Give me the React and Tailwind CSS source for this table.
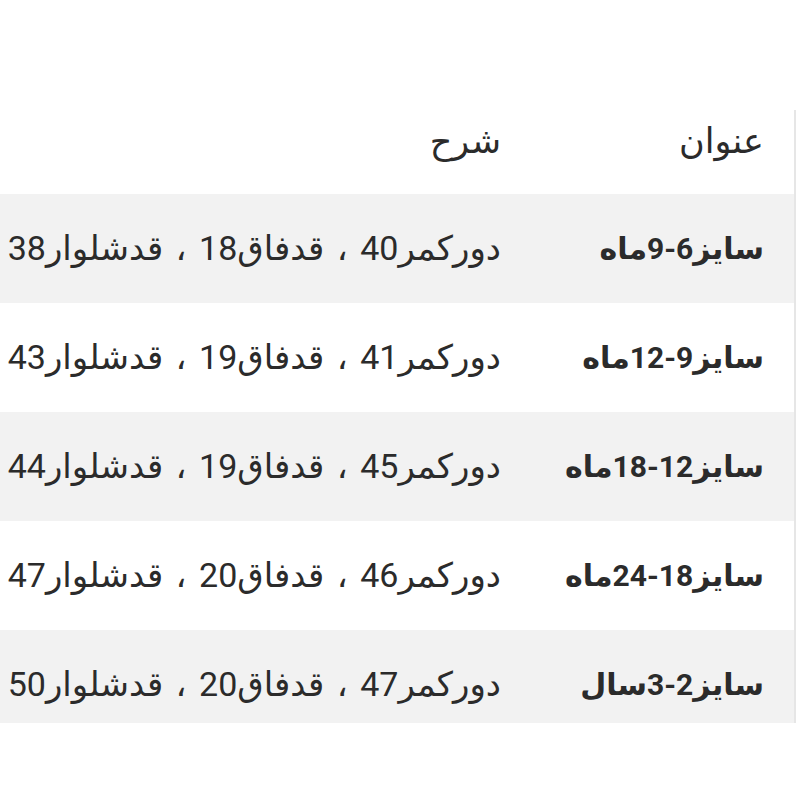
const rows = [
  { title: 'سایز6-9ماه', desc: 'دورکمر40 ، قدفاق18 ، قدشلوار38' },
  { title: 'سایز9-12ماه', desc: 'دورکمر41 ، قدفاق19 ، قدشلوار43' },
  { title: 'سایز12-18ماه', desc: 'دورکمر45 ، قدفاق19 ، قدشلوار44' },
  { title: 'سایز18-24ماه', desc: 'دورکمر46 ، قدفاق20 ، قدشلوار47' },
  { title: 'سایز2-3سال', desc: 'دورکمر47 ، قدفاق20 ، قدشلوار50' },
];

export default function App() {
  return (
    <div className="w-[800px] h-[800px] bg-white overflow-hidden font-['Roboto','DejaVu_Sans',sans-serif] text-[#2b2b2b]">
      <div className="h-[110px]" />
      <div dir="rtl" className="w-[796px]">
        <table className="w-full border-collapse border-r-2 border-[#e6e6e6] whitespace-nowrap">
          <thead>
            <tr className="h-[84px] text-[35px]">
              <th className="w-[266px] pr-[30px] text-right font-normal align-top pt-[6px]">عنوان</th>
              <th className="pr-[28px] text-right font-normal align-top pt-[6px]">شرح</th>
            </tr>
          </thead>
          <tbody>
            {rows.map((r, i) => {
              const last = i === rows.length - 1;
              return (
                <tr
                  key={r.title}
                  className={`${i % 2 === 0 ? 'bg-[#f2f2f2]' : 'bg-white'} ${last ? 'h-[93px]' : 'h-[109px]'}`}
                >
                  <td className={`pr-[30px] text-right font-bold text-[30px] ${last ? 'pt-[16px]' : ''}`}>{r.title}</td>
                  <td className={`pr-[28px] text-right text-[34px] [word-spacing:4px] ${last ? 'pt-[16px]' : ''}`}>{r.desc}</td>
                </tr>
              );
            })}
          </tbody>
        </table>
      </div>
    </div>
  );
}
